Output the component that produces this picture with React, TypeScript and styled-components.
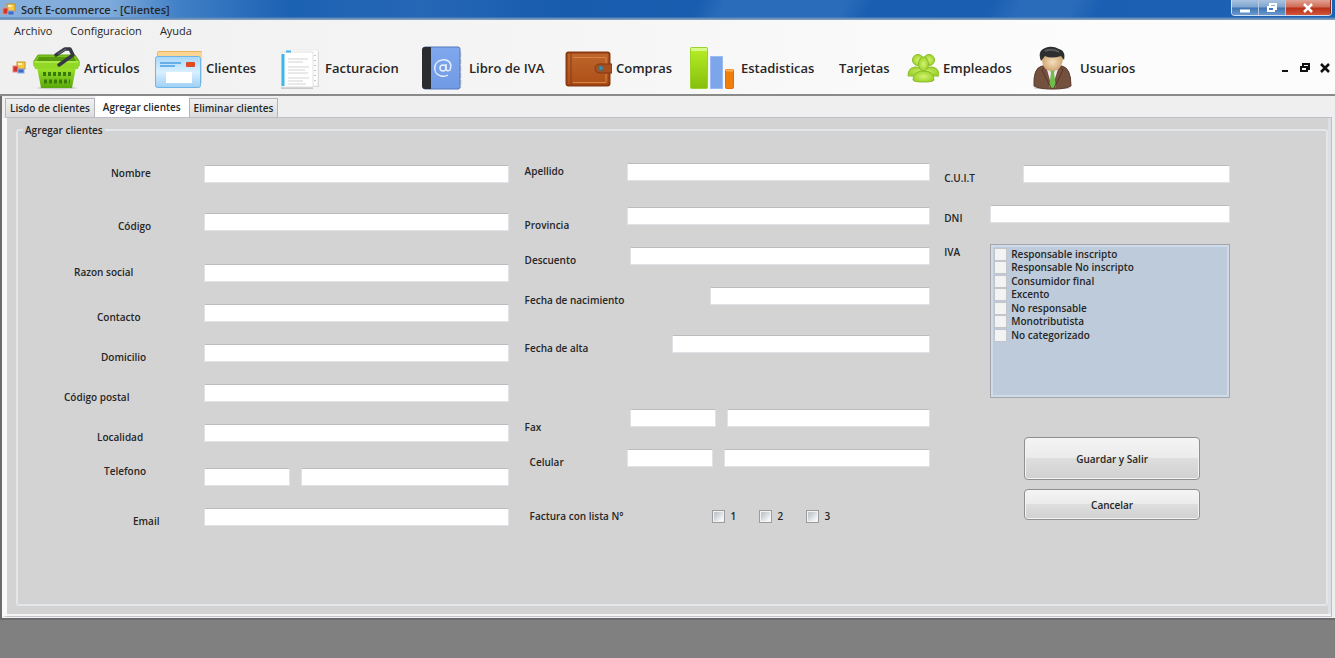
import React from "react";
import styled, { createGlobalStyle, css } from "styled-components";

const GlobalStyle = createGlobalStyle`
  *, *::before, *::after { box-sizing: border-box; }
  body {
    margin: 0;
    background: #808080;
    color: #262626;
    font-family: "Open Sans", "Noto Sans", sans-serif;
    font-size: 10px;
    font-weight: 600;
  }
  button, input { font: inherit; color: inherit; }
`;

const Window = styled.div`
  display: flex;
  flex-direction: column;
  min-height: 100vh;
`;

const TitleBar = styled.header`
  display: flex;
  align-items: flex-start;
  height: 20px;
  padding-left: 2px;
  background:
    linear-gradient(to bottom, transparent 17px, #5c87b8 18px, #8fa6c0 20px),
    linear-gradient(115deg, transparent 0 52%, #2a6cba 54% 63%, transparent 65% 74%, #2a6cba 76% 80%, transparent 82%),
    linear-gradient(to right, #86b0dc 0, #7eaadb 110px, #3f7fc6 180px, #1c62b2 290px, #2667b6 420px, #185cae 560px, #1c61b3 100%);
`;

const Title = styled.h1`
  flex: 1;
  margin: 0;
  padding-left: 5px;
  font-size: 11px;
  font-weight: 600;
  line-height: 19px;
`;

const TitleIcon = styled.span`
  display: flex;
  padding-top: 3px;
`;

const WindowButtons = styled.div`
  display: flex;
  width: 101px;
  height: 16px;
  margin-right: 3px;
  border: 1px solid #d3dfee;
  border-top: 0;
  border-radius: 0 0 4px 4px;
  overflow: hidden;
`;

const WindowButton = styled.button<{ $danger?: boolean }>`
  display: flex;
  flex: ${(p) => (p.$danger ? 46 : 27)};
  align-items: center;
  justify-content: center;
  padding: 0;
  border: 0;
  border-right: 1px solid ${(p) => (p.$danger ? "#8c2d20" : "#b4c8df")};
  background: ${(p) =>
    p.$danger
      ? "linear-gradient(#e0a294 0, #cf6b56 7px, #b92f17 8px, #d0553a 100%)"
      : "linear-gradient(#a9c3e0 0, #7ea5d0 7px, #3f74b2 8px, #6a9acd 100%)"};
`;

const Chrome = styled.div`
  border-bottom: 2px solid #8a8a8a;
  background: linear-gradient(to right, #f0f0f0 0, #f5f5f5 40%, #fcfcfc 80%);
`;

const MenuBar = styled.nav`
  display: flex;
  gap: 18px;
  height: 22px;
  padding-left: 14px;
`;

const MenuLink = styled.a`
  color: inherit;
  font-size: 11px;
  font-weight: 500;
  line-height: 22px;
  text-decoration: none;
`;

const ToolBar = styled.div`
  display: flex;
  align-items: center;
  height: 52px;
  padding: 0 4px 0 12px;
`;

const Tools = styled.nav`
  display: flex;
  flex: 1;
  padding-left: 6px;
`;

const Tool = styled.button<{ $width: number }>`
  display: flex;
  align-items: center;
  gap: 4px;
  width: ${(p) => p.$width}px;
  height: 48px;
  padding: 0;
  border: 0;
  background: none;
  font-size: 13px;
  font-weight: 600;
  white-space: nowrap;
`;

const ChildButtons = styled.div`
  display: flex;
  gap: 8px;
`;

const ChildButton = styled.button`
  display: flex;
  padding: 0;
  border: 0;
  background: none;
`;

const TabArea = styled.main`
  border-left: 2px solid #6c6c6c;
  border-bottom: 2px solid #6c6c6c;
  background: #efefef;
  padding: 0 3px 1px 0;
`;

const TabList = styled.div`
  display: flex;
  align-items: flex-end;
  height: 21px;
  padding-left: 3px;
`;

const Tab = styled.button<{ $active?: boolean }>`
  height: 19px;
  padding: 0 4px;
  border: 1px solid #b4b4be;
  border-bottom: 0;
  background: linear-gradient(#f1f1f1, #dcdcdc);
  line-height: 18px;
  white-space: nowrap;
  ${(p) =>
    p.$active &&
    css`
      height: 21px;
      padding: 0 7px;
      border-color: #fff;
      background: #fff;
    `}
`;

const TabPanel = styled.section`
  border: 1px solid #bdbdc8;
  border-left: 5px solid #fafafa;
  border-bottom-color: #c4c4cc;
  box-shadow: inset 0 -2px #f4f4f4, inset -3px 0 #dcdfe3;
  padding: 5px 3px 10px 9px;
  background: #d3d3d3;
`;

const Group = styled.fieldset`
  display: grid;
  grid-template-columns: 507fr 420fr 286fr;
  min-width: 0;
  margin: 0;
  padding: 26px 96px 79px 0;
  border: 2px solid #e3e7ea;
  border-radius: 3px;
`;

const Legend = styled.legend`
  margin-left: 5px;
  padding: 0 2px;
  line-height: 14px;
`;

const Column = styled.div<{ $top: number; $end: number }>`
  display: flex;
  flex-direction: column;
  padding: ${(p) => p.$top}px ${(p) => p.$end}px 0 0;
`;

const FormRow = styled.div<{ $space: number }>`
  display: flex;
  align-items: flex-start;
  height: 17px;
  margin-bottom: ${(p) => p.$space}px;
`;

type Level = "raised" | "level" | "low" | "lower";
const levels: Record<Level, number> = { raised: -5, level: 0, low: 5, lower: 10 };

const FieldLabel = styled.label<{ $width: number; $indent: number; $level: Level }>`
  flex: none;
  width: ${(p) => p.$width}px;
  margin-top: ${(p) => levels[p.$level]}px;
  padding-left: ${(p) => p.$indent}px;
  line-height: 16px;
  white-space: nowrap;
`;

const TextBox = styled.input<{ $code?: boolean }>`
  flex: ${(p) => (p.$code ? "0 0 86px" : "1")};
  min-width: 0;
  height: 18px;
  margin-right: ${(p) => (p.$code ? 11 : 0)}px;
  padding: 0 3px;
  border: 1px solid #dfe3e8;
  border-top-color: #bcbcbf;
  background: #fff;
  outline: 0;
`;

const Tick = styled.input`
  appearance: none;
  flex: none;
  width: 13px;
  height: 13px;
  margin: 0;
  border: 1px solid #9a9c9e;
  background: linear-gradient(135deg, #c3c9cf 0 25%, #fff 90%);
  box-shadow: inset 0 0 0 1px #f2f2f2;
`;

const ListTick = styled(Tick)`
  border-color: #c2c6ca;
  background: #f3f3f3;
`;

const Option = styled.label`
  display: flex;
  align-items: center;
  gap: 6px;
  width: 47px;
  line-height: 16px;
`;

const OptionList = styled.div`
  flex: 1;
  height: 154px;
  padding: 2px 3px;
  border: 1px solid #a3a7ad;
  background: #bdcbda;
  box-shadow: inset 0 0 0 2px #cfdbe8;
`;

const ListOption = styled.label`
  display: flex;
  align-items: center;
  gap: 4px;
  height: 14px;
  margin-bottom: -1px;
  white-space: nowrap;
  &:nth-child(2n) { margin-bottom: 0; }
`;

const Actions = styled.div`
  display: flex;
  flex-direction: column;
  gap: 9px;
  padding: 176px 30px 0 80px;
`;

const Action = styled.button<{ $tall?: boolean }>`
  height: ${(p) => (p.$tall ? 43 : 31)}px;
  border: 1px solid #8f8f8f;
  border-radius: 4px;
  background: linear-gradient(#f4f4f4 0, #ebebeb 48%, #dedede 50%, #d0d0d0 100%);
  box-shadow: inset 0 0 0 1px #f4f4f4;
`;

const AppMark = () => (
  <svg width="14" height="14" viewBox="0 0 14 14" aria-hidden="true">
    <rect x="5" y="1" width="8" height="7" fill="#f6c945" stroke="#c99526" />
    <rect x="6" y="2" width="4" height="2" fill="#fff0ae" />
    <rect x="1" y="5" width="5" height="6" fill="#d0362b" stroke="#e58c7f" />
    <rect x="6" y="8" width="6" height="4" fill="#3e6bc4" stroke="#90abdf" />
  </svg>
);

const BasketIcon = () => (
  <svg width="48" height="44" viewBox="0 0 48 44" aria-hidden="true">
    <defs>
      <linearGradient id="basket" x2="0" y2="1">
        <stop offset="0" stopColor="#a2e62c" />
        <stop offset="1" stopColor="#58a80c" />
      </linearGradient>
    </defs>
    <ellipse cx="25" cy="42" rx="20" ry="1.500" fill="#cfcfcf" />
    <path d="M2 15 6 9h37l4 6v5H2z" fill="#79c41a" stroke="#67aa15" />
    <path d="M7 11h35l2 4H5z" fill="#56990f" />
    <path d="M5 21h39l-4 21H9z" fill="url(#basket)" />
    <path d="M1 15h47l-2 8H3z" fill="#92d927" />
    <path d="M3 16h43" stroke="#c4f56c" />
    <path d="M11 28h28M12 35.500h26" stroke="#397b08" strokeWidth="4" strokeDasharray="3 2" />
    <path d="m27 19 14-10-3-6h-5L24 9" fill="none" stroke="#353842" strokeWidth="3.500" strokeLinejoin="round" strokeLinecap="round" />
    <path d="m34 3-8 5" stroke="#777b84" />
  </svg>
);

const CardIcon = () => (
  <svg width="48" height="44" viewBox="0 0 48 44" aria-hidden="true">
    <defs>
      <linearGradient id="card" x2="0" y2="1">
        <stop offset="0" stopColor="#a8d8fa" />
        <stop offset=".5" stopColor="#d9f0ff" />
        <stop offset="1" stopColor="#9dd0f5" />
      </linearGradient>
    </defs>
    <rect x="3.500" y="5.500" width="45" height="31" rx="1" fill="#fbd693" stroke="#eeb65c" />
    <rect x="1.500" y="10.500" width="45" height="31" rx="2" fill="url(#card)" stroke="#70b5e6" />
    <path d="M6 17h21M6 20h15" stroke="#4d9de0" strokeWidth="1.500" />
    <rect x="32" y="16" width="9" height="5" rx="1" fill="#df4c24" />
    <rect x="12" y="26" width="26" height="11" fill="#fff" />
  </svg>
);

const PagesIcon = () => (
  <svg width="48" height="44" viewBox="0 0 48 44" aria-hidden="true">
    <path d="M8 42h32M11 40h34V6" stroke="#c9c9c9" strokeWidth="2" fill="none" />
    <path d="M14 4h31v36H14z" fill="#fdfdfd" stroke="#ececec" />
    <path d="M9 6h31v35H9z" fill="#fff" stroke="#e2e2e2" />
    <path d="M10 8v32" stroke="#41b5e8" strokeWidth="3" />
    <path d="M13 5.500h5" stroke="#41b5e8" strokeWidth="2" />
    <path d="M15 13h20M15 16h15M15 21h21M15 24h17M15 27h20M15 32h21M15 35h15M15 38h18" stroke="#d3d3d3" />
    <path d="M42 9v30" stroke="#c5c5c5" strokeWidth="2" strokeDasharray="1 4" />
  </svg>
);

const BookIcon = () => (
  <svg width="48" height="44" viewBox="0 0 48 44" aria-hidden="true">
    <defs>
      <linearGradient id="book" x2="0" y2="1">
        <stop offset="0" stopColor="#7fa8ee" />
        <stop offset="1" stopColor="#709ae4" />
      </linearGradient>
    </defs>
    <path d="M43 6v36" stroke="#d8d3c7" strokeWidth="3" strokeDasharray="5 2" />
    <rect x="6" y="1" width="37" height="42" rx="2" fill="url(#book)" stroke="#5578bd" />
    <path d="M14 1H8q-3 0-3 3v36q0 3 3 3h6z" fill="#292d31" />
    <circle cx="26" cy="22" r="3" fill="none" stroke="#e7efff" strokeWidth="1.500" />
    <path d="M29 18v5q1 3 4 1c3-8-3-11-8-10-9 1-10 14-1 16q4 1 7-1" fill="none" stroke="#e7efff" strokeWidth="1.500" />
  </svg>
);

const WalletIcon = () => (
  <svg width="48" height="44" viewBox="0 0 48 44" aria-hidden="true">
    <defs>
      <linearGradient id="wallet" x2="0" y2="1">
        <stop offset="0" stopColor="#be672c" />
        <stop offset="1" stopColor="#ad4e17" />
      </linearGradient>
    </defs>
    <rect x="2.500" y="6.500" width="43" height="33" rx="2" fill="url(#wallet)" stroke="#8b3b12" strokeWidth="2" />
    <path d="M7 7v32" stroke="#8b3b12" />
    <path d="M9 11.500h33M9 36.500h33M42 12v6M42 28v8" stroke="#d98342" />
    <path d="M48 18H36q-5 0-5 4.500t5 4.500h12z" fill="#a94f1f" stroke="#843811" />
    <circle cx="37" cy="22.500" r="3" fill="#5d6a67" />
    <circle cx="37" cy="22" r="1.500" fill="#2d9ac0" />
  </svg>
);

const ChartIcon = () => (
  <svg width="48" height="44" viewBox="0 0 48 44" aria-hidden="true">
    <defs>
      <linearGradient id="bar" x2="0" y2="1">
        <stop offset="0" stopColor="#b6ef25" />
        <stop offset="1" stopColor="#86bf0c" />
      </linearGradient>
    </defs>
    <rect x="1.500" y="1.500" width="17" height="41" rx="1" fill="url(#bar)" stroke="#9bd22a" />
    <path d="M2 3.500h16" stroke="#d6fa87" strokeWidth="3" />
    <rect x="21.500" y="10.500" width="12" height="32" fill="#7ca5ea" stroke="#9bbcf2" />
    <rect x="36.500" y="23.500" width="8" height="19" rx="1" fill="#f27d09" stroke="#e56c04" />
    <path d="M37 24.500h7" stroke="#ffb25a" strokeWidth="2" />
  </svg>
);

const TeamIcon = () => (
  <svg width="32" height="30" viewBox="0 0 32 30" aria-hidden="true">
    <defs>
      <radialGradient id="team">
        <stop offset="0" stopColor="#d4f26c" />
        <stop offset="1" stopColor="#9ed330" />
      </radialGradient>
    </defs>
    <g fill="url(#team)" stroke="#8abd26" strokeWidth="1">
      <path d="M1 23q0-9 8-9 6 0 8 9zM15 23q1-9 9-9 8 0 8 9z" />
      <circle cx="11" cy="7" r="5.500" />
      <circle cx="22" cy="7" r="5.500" />
      <path d="M6 27q0-9 10.500-9T27 27q-1 2-10.500 2T6 27z" />
      <ellipse cx="16.500" cy="11" rx="5" ry="7" />
    </g>
  </svg>
);

const UserIcon = () => (
  <svg width="48" height="44" viewBox="0 0 48 44" aria-hidden="true">
    <defs>
      <radialGradient id="face">
        <stop offset="0" stopColor="#f5dfbd" />
        <stop offset="1" stopColor="#cfa775" />
      </radialGradient>
    </defs>
    <ellipse cx="24" cy="42" rx="18" ry="1.500" fill="#c3bebc" />
    <path d="M6 40q-1-18 8-20h20q9 2 9 20-5 3-18.500 3T6 40z" fill="#74503f" stroke="#5c3c2f" />
    <path d="m18 20 6 22 7-22z" fill="#f4e4ef" />
    <path d="m22 24 2-3 3 3-1 3 2 14q-4 2-7 0l2-14z" fill="#6fbd4b" />
    <path d="m17 20-3 4 9 18M32 20l3 4-9 18" fill="none" stroke="#573528" />
    <path d="M14 12q0 13 10 13t11-13q-3-5-11-5t-10 5z" fill="url(#face)" />
    <path d="M13 15q-4-10 4-13 7-3 14 1 7 2 5 11l-3-4q-10 3-16 0z" fill="#2c2e2f" />
    <path d="M17 5q7-3 14 1" stroke="#565a5b" fill="none" strokeWidth="2" />
  </svg>
);

const Glyph = ({ kind, color }: { kind: "min" | "restore" | "close"; color: string }) => (
  <svg width="12" height="10" viewBox="0 0 12 10" fill="none" stroke={color} strokeWidth="2" aria-hidden="true">
    {kind === "min" && <path d={color === "#fff" ? "M1 8h10" : "M3 8h6"} strokeWidth={color === "#fff" ? 3 : 2} />}
    {kind === "restore" && (
      <>
        <path d="M4 3V1h6v5H8" />
        <rect x="2" y="4" width="6" height="4" />
      </>
    )}
    {kind === "close" && <path d="m2 1 8 8M10 1 2 9" strokeWidth="2.500" />}
  </svg>
);

const tools = [
  { name: "Articulos", width: 122, icon: <BasketIcon /> },
  { name: "Clientes", width: 119, icon: <CardIcon /> },
  { name: "Facturacion", width: 144, icon: <PagesIcon /> },
  { name: "Libro de IVA", width: 147, icon: <BookIcon /> },
  { name: "Compras", width: 125, icon: <WalletIcon /> },
  { name: "Estadisticas", width: 150, icon: <ChartIcon /> },
  { name: "Tarjetas", width: 68, icon: null },
  { name: "Empleados", width: 121, icon: <TeamIcon /> },
  { name: "Usuarios", width: 110, icon: <UserIcon /> },
];

type Field = { name: string; indent?: number; width: number; level: Level; space: number; code?: boolean };

const contactFields: Field[] = [
  { name: "Nombre", indent: 93, width: 186, level: "level", space: 31 },
  { name: "Código", indent: 100, width: 186, level: "low", space: 34 },
  { name: "Razon social", indent: 56, width: 186, level: "level", space: 23 },
  { name: "Contacto", indent: 79, width: 186, level: "low", space: 23 },
  { name: "Domicilio", indent: 83, width: 186, level: "low", space: 23 },
  { name: "Código postal", indent: 46, width: 186, level: "low", space: 23 },
  { name: "Localidad", indent: 79, width: 186, level: "low", space: 27 },
  { name: "Telefono", indent: 86, width: 186, level: "raised", space: 23, code: true },
  { name: "Email", indent: 115, width: 186, level: "low", space: 0 },
];

const detailFields: Field[] = [
  { name: "Apellido", width: 102, level: "level", space: 27 },
  { name: "Provincia", width: 102, level: "lower", space: 23 },
  { name: "Descuento", width: 105, level: "low", space: 23 },
  { name: "Fecha de nacimiento", width: 185, level: "low", space: 31 },
  { name: "Fecha de alta", width: 147, level: "low", space: 57 },
  { name: "Fax", width: 105, level: "lower", space: 23, code: true },
  { name: "Celular", indent: 5, width: 102, level: "low", space: 42, code: true },
];

const taxFields: Field[] = [
  { name: "C.U.I.T", width: 79, level: "low", space: 23 },
  { name: "DNI", width: 46, level: "low", space: 22 },
];

const taxTypes = [
  "Responsable inscripto",
  "Responsable No inscripto",
  "Consumidor final",
  "Excento",
  "No responsable",
  "Monotributista",
  "No categorizado",
];

const FieldRow = ({ field }: { field: Field }) => {
  const id = field.name.toLowerCase().replace(/[^a-z]+/g, "-");
  return (
    <FormRow $space={field.space}>
      <FieldLabel htmlFor={id} $width={field.width} $indent={field.indent ?? 0} $level={field.level}>
        {field.name}
      </FieldLabel>
      {field.code && <TextBox $code aria-label={`${field.name}, prefijo`} />}
      <TextBox id={id} />
    </FormRow>
  );
};

export default function App() {
  return (
    <Window>
      <GlobalStyle />
      <TitleBar>
        <TitleIcon>
          <AppMark />
        </TitleIcon>
        <Title>Soft E-commerce - [Clientes]</Title>
        <WindowButtons>
          <WindowButton aria-label="Minimizar"><Glyph kind="min" color="#fff" /></WindowButton>
          <WindowButton aria-label="Restaurar"><Glyph kind="restore" color="#fff" /></WindowButton>
          <WindowButton $danger aria-label="Cerrar"><Glyph kind="close" color="#fff" /></WindowButton>
        </WindowButtons>
      </TitleBar>
      <Chrome>
        <MenuBar>
          {["Archivo", "Configuracion", "Ayuda"].map((item) => (
            <MenuLink key={item} href="#">{item}</MenuLink>
          ))}
        </MenuBar>
        <ToolBar>
          <AppMark />
          <Tools>
            {tools.map((tool) => (
              <Tool key={tool.name} $width={tool.width}>
                {tool.icon}
                {tool.name}
              </Tool>
            ))}
          </Tools>
          <ChildButtons>
            <ChildButton aria-label="Minimizar ventana"><Glyph kind="min" color="#111" /></ChildButton>
            <ChildButton aria-label="Restaurar ventana"><Glyph kind="restore" color="#111" /></ChildButton>
            <ChildButton aria-label="Cerrar ventana"><Glyph kind="close" color="#111" /></ChildButton>
          </ChildButtons>
        </ToolBar>
      </Chrome>
      <TabArea>
        <TabList role="tablist">
          <Tab role="tab">Lisdo de clientes</Tab>
          <Tab role="tab" $active aria-selected="true">Agregar clientes</Tab>
          <Tab role="tab">Eliminar clientes</Tab>
        </TabList>
        <TabPanel>
          <Group>
            <Legend>Agregar clientes</Legend>
            <Column $top={2} $end={16}>
              {contactFields.map((field) => <FieldRow key={field.name} field={field} />)}
            </Column>
            <Column $top={0} $end={14}>
              {detailFields.map((field) => <FieldRow key={field.name} field={field} />)}
              <FormRow $space={0}>
                <FieldLabel as="span" $width={187} $indent={5} $level="level">Factura con lista N°</FieldLabel>
                {["1", "2", "3"].map((n) => (
                  <Option key={n}><Tick type="checkbox" />{n}</Option>
                ))}
              </FormRow>
            </Column>
            <Column $top={2} $end={0}>
              {taxFields.map((field) => <FieldRow key={field.name} field={field} />)}
              <FormRow $space={0}>
                <FieldLabel as="span" $width={46} $indent={0} $level="level">IVA</FieldLabel>
                <OptionList role="group" aria-label="IVA">
                  {taxTypes.map((type) => (
                    <ListOption key={type}><ListTick type="checkbox" />{type}</ListOption>
                  ))}
                </OptionList>
              </FormRow>
              <Actions>
                <Action $tall>Guardar y Salir</Action>
                <Action>Cancelar</Action>
              </Actions>
            </Column>
          </Group>
        </TabPanel>
      </TabArea>
    </Window>
  );
}
